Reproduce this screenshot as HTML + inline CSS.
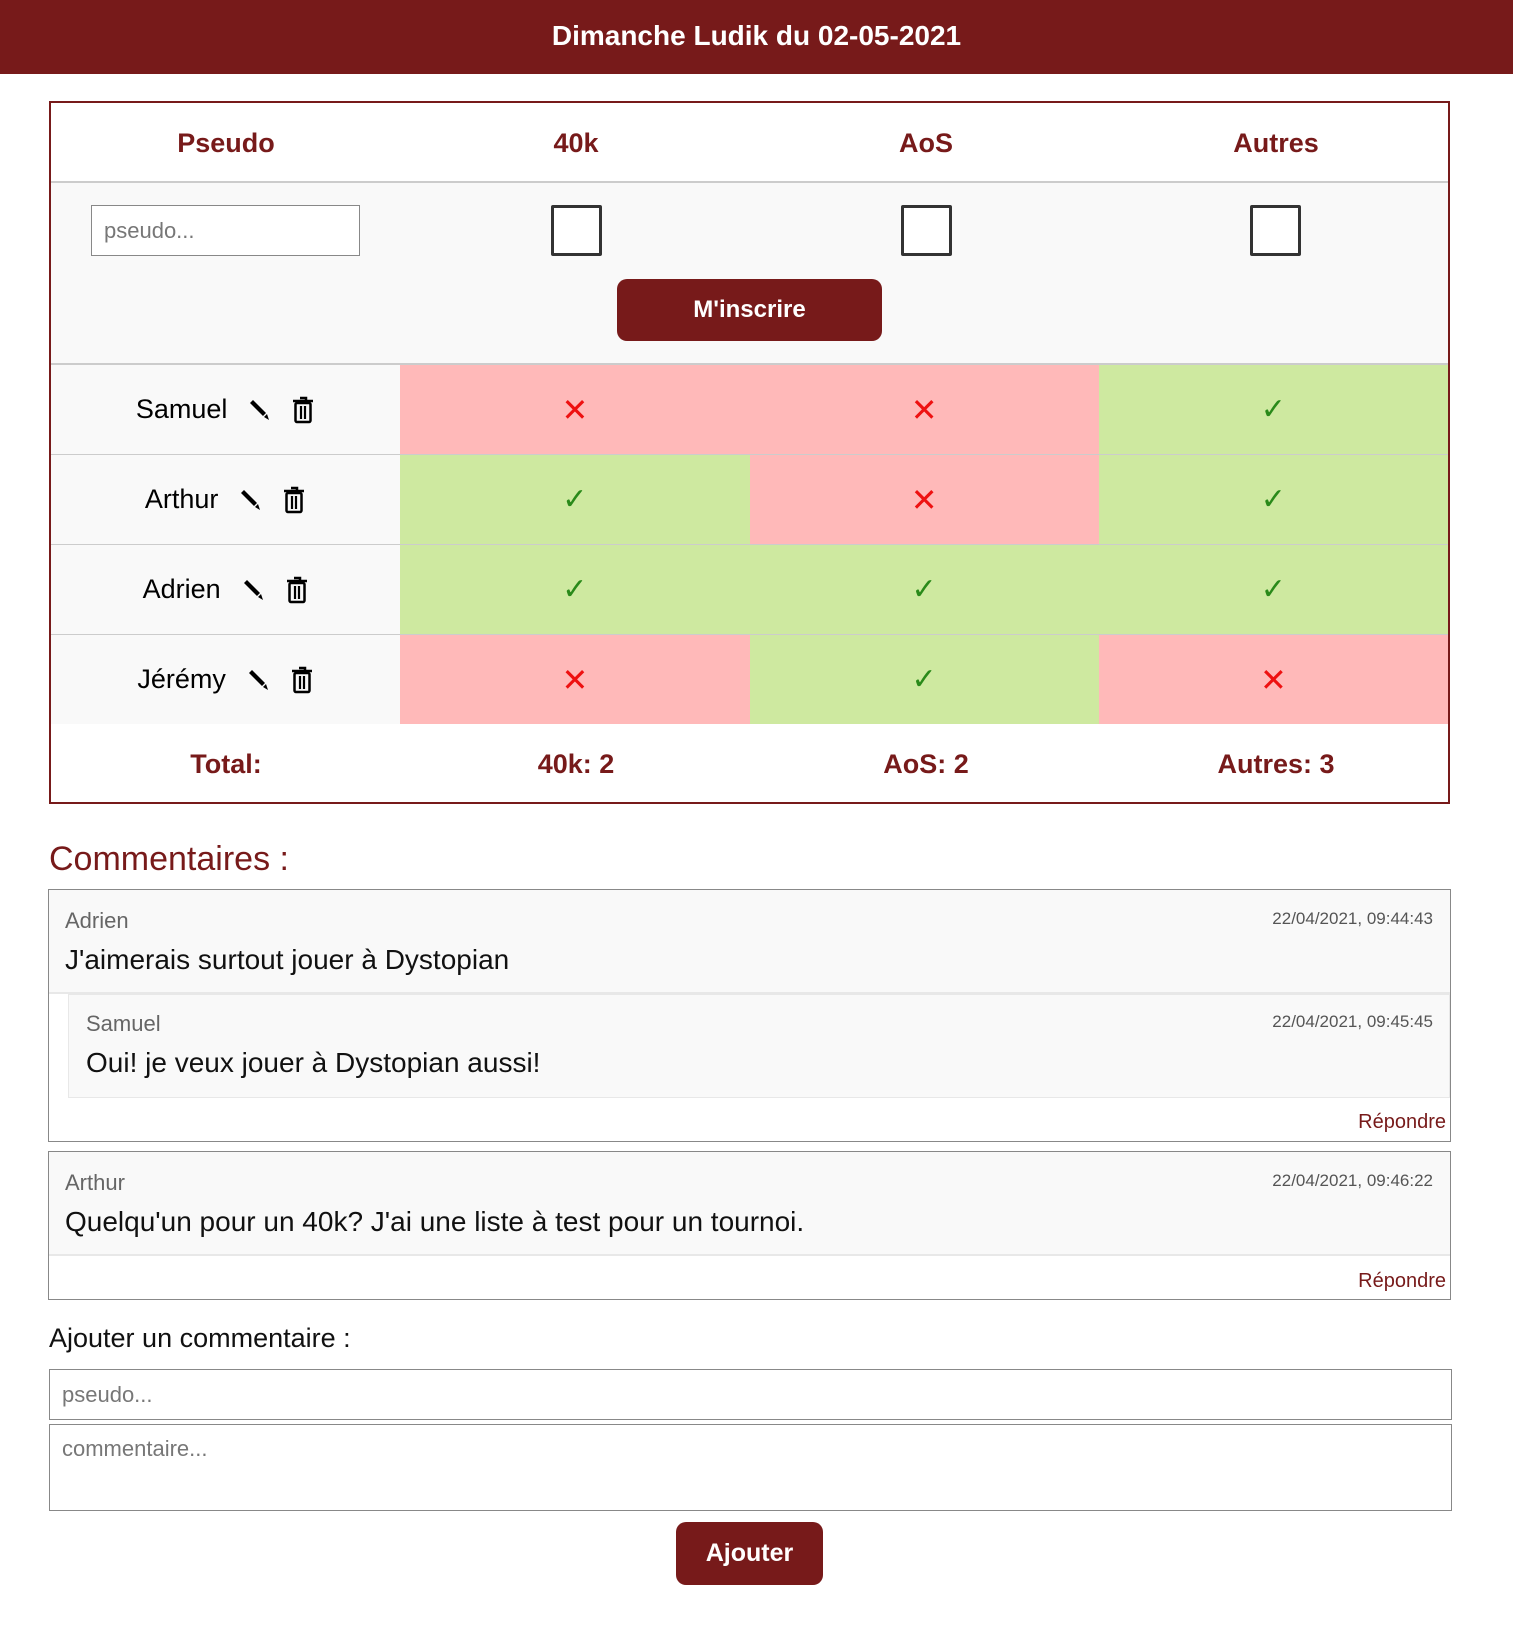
<!DOCTYPE html>
<html><head><meta charset="utf-8"><style>
*{box-sizing:border-box;margin:0;padding:0}
body{width:1513px;height:1635px;background:#fff;font-family:"Liberation Sans",Arial,sans-serif;position:relative;overflow:hidden}
.a{position:absolute}
.hdr{left:0;top:0;width:1513px;height:74px;background:#771a1a;color:#fff;font-weight:bold;font-size:28px;text-align:center;line-height:72px}
.tbl{left:49px;top:101px;width:1401px;height:703px;border:2px solid #771a1a;background:#fff}
.th{top:0;height:80px;line-height:80px;width:350px;text-align:center;color:#771a1a;font-weight:bold;font-size:27px}
.cell{width:350px;height:89px;display:flex;align-items:center;justify-content:center;font-size:27px}
.r{background:#ffb9b9;color:#ee1111;font-size:32px}
.g{background:#cee9a0;color:#2a8a1a;font-size:30px}
.cb{width:51px;height:51px;border:3px solid #333;background:#fff;border-radius:2px}
.hl{height:2px;background:#ccc;left:0;width:1397px}
.name{background:#f9f9f9}
.ic{margin-left:20px;display:inline-block;line-height:0}
.box{left:48px;width:1403px;border:1px solid #888;background:#fff}
.au{color:#666;font-size:22px}
.tx{font-size:28px;color:#111}
.dt{color:#555;font-size:17px}
.rep{color:#771a1a;font-size:20px}
</style></head><body>
<svg width="0" height="0" style="position:absolute">
<symbol id="pen" viewBox="0 0 24 24"><path d="M3 5 L6 2 L19 15 L16 18 Z" fill="#000"/><path d="M17 19 L20 16 L22 22 Z" fill="#000"/></symbol>
<symbol id="bin" viewBox="0 0 24 28"><path d="M9 2h6v3M2 5h20" stroke="#000" stroke-width="2.5" fill="none"/><rect x="4.5" y="7" width="15" height="19" rx="1.5" stroke="#000" stroke-width="2.5" fill="none"/><path d="M10 10v13M14 10v13" stroke="#000" stroke-width="2.2"/></symbol>
</svg>
<div class="a hdr">Dimanche Ludik du 02-05-2021</div>
<div class="a tbl">
 <div class="a th" style="left:0">Pseudo</div>
 <div class="a th" style="left:350px">40k</div>
 <div class="a th" style="left:700px">AoS</div>
 <div class="a th" style="left:1050px">Autres</div>
 <div class="a hl" style="top:78px"></div>
 <div class="a" style="left:0;top:80px;width:1397px;height:182px;background:#f9f9f9"></div>
 <div class="a" style="left:40px;top:102px;width:269px;height:51px;border:1px solid #888;background:#fff;color:#777;font-size:22px;line-height:49px;padding-left:12px">pseudo...</div>
 <div class="a cb" style="left:500px;top:102px"></div>
 <div class="a cb" style="left:850px;top:102px"></div>
 <div class="a cb" style="left:1199px;top:102px"></div>
 <div class="a" style="left:566px;top:176px;width:265px;height:62px;background:#771a1a;border-radius:10px;color:#fff;font-weight:bold;font-size:24px;text-align:center;line-height:62px">M'inscrire</div>
 <div class="a hl" style="top:260px"></div>
 <div class="a" style="left:0;top:262px;width:1397px">
  <div style="display:flex"><div class="cell name">Samuel<span class="ic"><svg width="24" height="24"><use href="#pen"/></svg></span><span class="ic"><svg width="24" height="28"><use href="#bin"/></svg></span></div><div class="cell r">✕</div><div class="cell r">✕</div><div class="cell g">✓</div></div>
  <div style="height:1px;background:#ccc"></div>
  <div style="display:flex"><div class="cell name">Arthur<span class="ic"><svg width="24" height="24"><use href="#pen"/></svg></span><span class="ic"><svg width="24" height="28"><use href="#bin"/></svg></span></div><div class="cell g">✓</div><div class="cell r">✕</div><div class="cell g">✓</div></div>
  <div style="height:1px;background:#ccc"></div>
  <div style="display:flex"><div class="cell name">Adrien<span class="ic"><svg width="24" height="24"><use href="#pen"/></svg></span><span class="ic"><svg width="24" height="28"><use href="#bin"/></svg></span></div><div class="cell g">✓</div><div class="cell g">✓</div><div class="cell g">✓</div></div>
  <div style="height:1px;background:#ccc"></div>
  <div style="display:flex"><div class="cell name">Jérémy<span class="ic"><svg width="24" height="24"><use href="#pen"/></svg></span><span class="ic"><svg width="24" height="28"><use href="#bin"/></svg></span></div><div class="cell r">✕</div><div class="cell g">✓</div><div class="cell r">✕</div></div>
 </div>
 <div class="a th" style="left:0;top:621px">Total:</div>
 <div class="a th" style="left:350px;top:621px">40k: 2</div>
 <div class="a th" style="left:700px;top:621px">AoS: 2</div>
 <div class="a th" style="left:1050px;top:621px">Autres: 3</div>
</div>
<div class="a" style="left:49px;top:840px;font-size:34px;color:#771a1a">Commentaires :</div>
<div class="a box" style="top:889px;height:253px">
 <div class="a" style="left:0;top:0;width:1401px;height:104px;background:#f9f9f9;border-bottom:2px solid #e8e8e8"></div>
 <div class="a au" style="left:16px;top:18px">Adrien</div>
 <div class="a dt" style="right:17px;top:19px">22/04/2021, 09:44:43</div>
 <div class="a tx" style="left:16px;top:54px">J'aimerais surtout jouer à Dystopian</div>
 <div class="a" style="left:19px;top:104px;width:1382px;height:104px;background:#f9f9f9;border:1px solid #e8e8e8"></div>
 <div class="a au" style="left:37px;top:121px">Samuel</div>
 <div class="a dt" style="right:17px;top:122px">22/04/2021, 09:45:45</div>
 <div class="a tx" style="left:37px;top:157px">Oui! je veux jouer à Dystopian aussi!</div>
 <div class="a rep" style="right:4px;top:221px">Répondre</div>
</div>
<div class="a box" style="top:1151px;height:149px">
 <div class="a" style="left:0;top:0;width:1401px;height:104px;background:#f9f9f9;border-bottom:2px solid #e8e8e8"></div>
 <div class="a au" style="left:16px;top:18px">Arthur</div>
 <div class="a dt" style="right:17px;top:19px">22/04/2021, 09:46:22</div>
 <div class="a tx" style="left:16px;top:54px">Quelqu'un pour un 40k? J'ai une liste à test pour un tournoi.</div>
 <div class="a rep" style="right:4px;top:118px">Répondre</div>
</div>
<div class="a" style="left:49px;top:1323px;font-size:27px;color:#111">Ajouter un commentaire :</div>
<div class="a" style="left:49px;top:1369px;width:1403px;height:51px;border:1px solid #888;color:#777;font-size:22px;line-height:49px;padding-left:12px">pseudo...</div>
<div class="a" style="left:49px;top:1424px;width:1403px;height:87px;border:1px solid #888;color:#777;font-size:22px;padding:11px 12px">commentaire...</div>
<div class="a" style="left:676px;top:1522px;width:147px;height:63px;background:#771a1a;border-radius:10px;color:#fff;font-weight:bold;font-size:25px;text-align:center;line-height:63px">Ajouter</div>
</body></html>
